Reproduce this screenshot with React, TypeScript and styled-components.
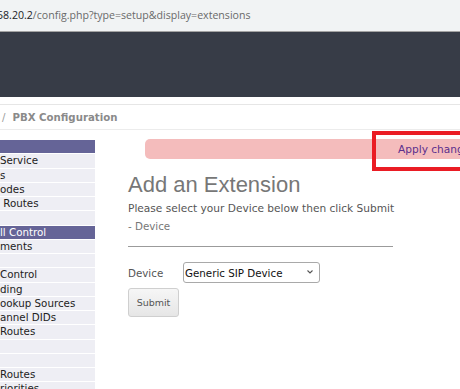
import React from 'react'
import styled, { createGlobalStyle } from 'styled-components'

const GlobalStyle = createGlobalStyle`
  body {
    margin: 0;
    overflow: hidden;
    background: #fff;
  }
`

type NavItem = { label: string; active?: boolean }

const navItems: NavItem[] = [
  { label: '', active: true },
  { label: 'Service' },
  { label: 's' },
  { label: 'odes' },
  { label: ' Routes' },
  { label: '' },
  { label: 'll Control', active: true },
  { label: 'ments' },
  { label: '' },
  { label: 'Control' },
  { label: 'ding' },
  { label: 'ookup Sources' },
  { label: 'annel DIDs' },
  { label: 'Routes' },
  { label: '' },
  { label: '' },
  { label: 'Routes' },
  { label: 'riorities' },
]

const Chevron = () => (
  <svg width="8" height="6" viewBox="0 0 8 6">
    <path d="M1.5 1.5 L4 4 L6.5 1.5" fill="none" stroke="#555" strokeWidth="1.1" />
  </svg>
)

export default function App() {
  return (
    <>
      <GlobalStyle />
      <Page>
        <AddressBar>
          <Host>58.20.2</Host>
          <Path>/config.php?type=setup&amp;display=extensions</Path>
        </AddressBar>
        <TopBand />
        <Breadcrumb>
          <Slash>/</Slash>
          <Crumb>PBX Configuration</Crumb>
        </Breadcrumb>
        <Main>
          <Sidebar>
            {navItems.map((item, index) => (
              <NavRow key={`nav-${index}`} $active={item.active}>
                {item.label}
              </NavRow>
            ))}
          </Sidebar>
          <Content>
            <ApplyBar>
              <ApplyLink>Apply changes</ApplyLink>
              <Highlight />
            </ApplyBar>
            <Title>Add an Extension</Title>
            <Intro>Please select your Device below then click Submit</Intro>
            <Section>- Device</Section>
            <Rule />
            <FieldRow>
              <Label>Device</Label>
              <SelectWrap>
                <Select defaultValue="generic-sip">
                  <option value="generic-sip">Generic SIP Device</option>
                  <option value="generic-iax">Generic IAX2 Device</option>
                </Select>
                <ChevronSlot>
                  <Chevron />
                </ChevronSlot>
              </SelectWrap>
            </FieldRow>
            <SubmitButton>Submit</SubmitButton>
          </Content>
        </Main>
      </Page>
    </>
  )
}

const Page = styled.div`
  width: 460px;
  height: 389px;
  overflow: hidden;
  font-family: 'DejaVu Sans', Verdana, sans-serif;
`

const AddressBar = styled.div`
  box-sizing: border-box;
  height: 32px;
  background: #f1f3f4;
  border-bottom: 1px solid #a3a3a3;
  display: flex;
  align-items: center;
  font-family: 'Open Sans', 'Noto Sans', sans-serif;
  font-size: 10.6px;
  margin-left: -3px;
  padding-bottom: 1px;
`

const Host = styled.span`
  color: #202124;
`

const Path = styled.span`
  color: #6a6a6a;
`

const TopBand = styled.div`
  height: 65px;
  background: #373c47;
`

const Breadcrumb = styled.div`
  margin-top: 7px;
  height: 23px;
  border-top: 1px solid #e6e6e6;
  border-bottom: 1px solid #ececec;
  display: flex;
  align-items: center;
  gap: 7px;
  padding-left: 2px;
  padding-top: 1px;
  font-size: 10.2px;
  font-weight: bold;
  color: #8a8a8a;
`

const Slash = styled.span`
  font-weight: normal;
  color: #9a9a9a;
`

const Crumb = styled.span``

const Main = styled.div`
  display: flex;
`

const Sidebar = styled.div`
  width: 95px;
  flex-shrink: 0;
  margin-top: 10px;
`

const NavRow = styled.div<{ $active?: boolean }>`
  height: 13.25px;
  line-height: 13px;
  margin-bottom: 1px;
  font-size: 10.3px;
  white-space: pre;
  overflow: hidden;
  color: ${(p) => (p.$active ? '#ffffff' : '#222')};
  background: ${(p) => (p.$active ? '#656497' : '#eeeef4')};
`

const Content = styled.div`
  flex: 1;
  padding-left: 33px;
  padding-top: 9px;
`

const ApplyBar = styled.div`
  position: relative;
  margin-left: 17px;
  margin-right: -20px;
  height: 20px;
  background: #f4bcbc;
  border-radius: 5px 0 0 5px;
  display: flex;
  align-items: center;
  padding-left: 253px;
`

const ApplyLink = styled.span`
  font-size: 10.6px;
  color: #5b2e8c;
  white-space: nowrap;
`

const Highlight = styled.div`
  position: absolute;
  left: 227px;
  top: -8px;
  width: 120px;
  height: 40px;
  box-sizing: border-box;
  border: 4px solid #ea1c24;
`

const Title = styled.h1`
  margin: 14px 0 0;
  font-family: 'Liberation Sans', Arial, sans-serif;
  font-weight: normal;
  font-size: 22px;
  line-height: 24px;
  color: #777;
`

const Intro = styled.div`
  margin-top: 5px;
  font-size: 10.6px;
  color: #555;
`

const Section = styled.div`
  margin-top: 6px;
  font-size: 10.3px;
  color: #777;
`

const Rule = styled.div`
  margin-top: 14px;
  width: 265px;
  height: 1px;
  background: #9b9b9b;
`

const FieldRow = styled.div`
  display: flex;
  align-items: center;
  margin-top: 15px;
`

const Label = styled.span`
  width: 55px;
  font-size: 10.3px;
  color: #555;
`

const SelectWrap = styled.div`
  position: relative;
  display: flex;
`

const Select = styled.select`
  appearance: none;
  width: 137px;
  height: 21px;
  font-family: 'DejaVu Sans', Verdana, sans-serif;
  font-size: 10.3px;
  color: #111;
  background: #fff;
  border: 1px solid #a9a9a9;
  border-radius: 3px;
  padding: 0 0 0 1px;
`

const ChevronSlot = styled.span`
  position: absolute;
  right: 6px;
  top: 7px;
  display: flex;
  pointer-events: none;
`

const SubmitButton = styled.button`
  margin-top: 5px;
  width: 51px;
  height: 29px;
  font-family: 'DejaVu Sans', Verdana, sans-serif;
  font-size: 9.5px;
  color: #555;
  background: linear-gradient(#f6f6f6, #e6e6e6);
  border: 1px solid #cfcfcf;
  border-radius: 3px;
  padding: 0;
`
